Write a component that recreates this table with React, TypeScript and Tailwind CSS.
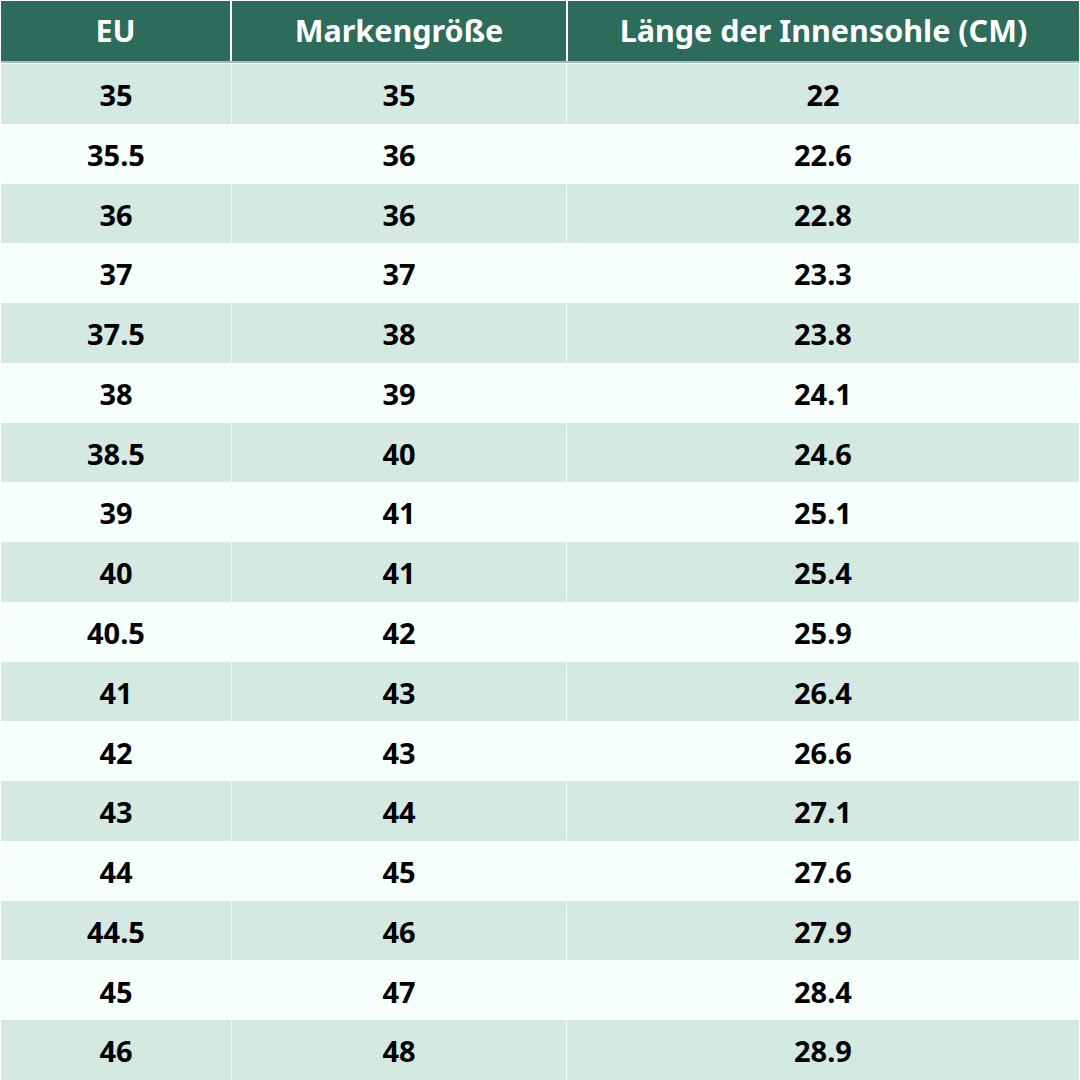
const rows = [
  ["35", "35", "22"],
  ["35.5", "36", "22.6"],
  ["36", "36", "22.8"],
  ["37", "37", "23.3"],
  ["37.5", "38", "23.8"],
  ["38", "39", "24.1"],
  ["38.5", "40", "24.6"],
  ["39", "41", "25.1"],
  ["40", "41", "25.4"],
  ["40.5", "42", "25.9"],
  ["41", "43", "26.4"],
  ["42", "43", "26.6"],
  ["43", "44", "27.1"],
  ["44", "45", "27.6"],
  ["44.5", "46", "27.9"],
  ["45", "47", "28.4"],
  ["46", "48", "28.9"],
];

const headers = ["EU", "Markengröße", "Länge der Innensohle (CM)"];

export default function App() {
  return (
    <div
      className="w-[1080px] h-[1080px] bg-white flex flex-col pt-px pr-px pl-px"
      style={{ fontFamily: '"Noto Sans", sans-serif' }}
    >
      {/* Header */}
      <div className="grid grid-cols-[229px_334px_1fr] gap-[2px] h-[62px] border-b-2 border-[#a9bdb6] shrink-0 bg-white">
        {headers.map((h) => (
          <div
            key={h}
            className="bg-[#2d6b5a] text-white font-bold text-[30.5px] flex items-center justify-center"
          >
            {h}
          </div>
        ))}
      </div>

      {/* Body */}
      <div className="flex-1 flex flex-col pt-px">
        {rows.map((r, i) => (
          <div
            key={i}
            className={`flex-1 grid grid-cols-[230px_335px_1fr] ${
              i % 2 === 0 ? "bg-[#d5e9e3]" : "bg-[#f5fffb]"
            }`}
          >
            {r.map((c, j) => (
              <div
                key={j}
                className={`flex items-center justify-center text-black font-bold text-[29px] pt-[2px] ${
                  j > 0 ? "border-l border-[#f2faf7]" : ""
                }`}
              >
                {c}
              </div>
            ))}
          </div>
        ))}
      </div>
    </div>
  );
}
